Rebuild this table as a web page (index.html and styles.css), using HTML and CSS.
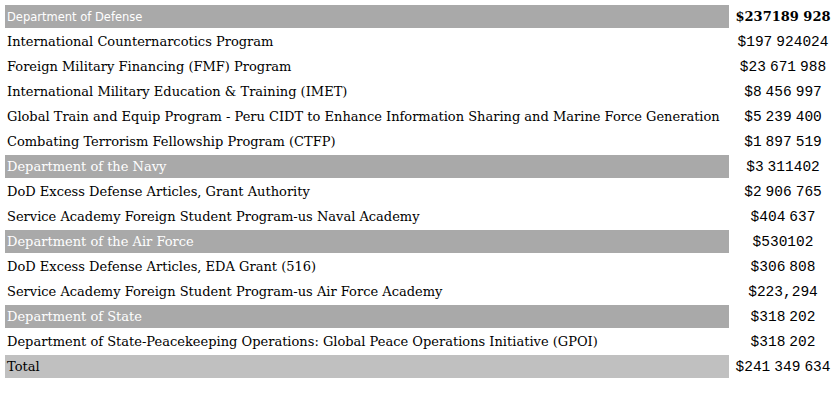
FILE: index.html
```html
<!DOCTYPE html>
<html>
<head>
<meta charset="utf-8">
<link rel="stylesheet" href="styles.css">
</head>
<body>
<table class="budget">
  <colgroup><col class="c-name"><col class="c-amt"></colgroup>
  <tr class="dept first"><td class="name">Department of Defense</td><td class="amt strong">$237189 928</td></tr>
  <tr><td class="name">International Counternarcotics Program</td><td class="amt">$197 924024</td></tr>
  <tr><td class="name">Foreign Military Financing (FMF) Program</td><td class="amt">$23 671 988</td></tr>
  <tr><td class="name">International Military Education &amp; Training (IMET)</td><td class="amt">$8 456 997</td></tr>
  <tr><td class="name">Global Train and Equip Program - Peru CIDT to Enhance Information Sharing and Marine Force Generation</td><td class="amt">$5 239 400</td></tr>
  <tr><td class="name">Combating Terrorism Fellowship Program (CTFP)</td><td class="amt">$1 897 519</td></tr>
  <tr class="dept"><td class="name">Department of the Navy</td><td class="amt">$3 311402</td></tr>
  <tr><td class="name">DoD Excess Defense Articles, Grant Authority</td><td class="amt">$2 906 765</td></tr>
  <tr><td class="name">Service Academy Foreign Student Program-us Naval Academy</td><td class="amt">$404 637</td></tr>
  <tr class="dept"><td class="name">Department of the Air Force</td><td class="amt">$530102</td></tr>
  <tr><td class="name">DoD Excess Defense Articles, EDA Grant (516)</td><td class="amt">$306 808</td></tr>
  <tr><td class="name">Service Academy Foreign Student Program-us Air Force Academy</td><td class="amt">$223,294</td></tr>
  <tr class="dept"><td class="name">Department of State</td><td class="amt">$318 202</td></tr>
  <tr><td class="name">Department of State-Peacekeeping Operations: Global Peace Operations Initiative (GPOI)</td><td class="amt">$318 202</td></tr>
  <tr class="total"><td class="name">Total</td><td class="amt">$241 349 634</td></tr>
</table>
</body>
</html>
```

FILE: styles.css
```css
html, body {
  margin: 0;
  padding: 0;
  background: #ffffff;
}

body {
  padding: 3px;
}

.budget {
  border-collapse: separate;
  border-spacing: 2px;
  table-layout: fixed;
  width: 834px;
  font-family: "DejaVu Serif", serif;
  font-size: 13px;
  color: #000000;
}

.c-name { width: 724px; }
.c-amt { width: 104px; }

.budget td {
  height: 23px;
  padding: 0 2px;
  white-space: nowrap;
  vertical-align: middle;
  box-sizing: border-box;
  overflow: hidden;
}

.amt {
  text-align: center;
  font-family: "Liberation Mono", monospace;
  font-size: 14.5px;
  word-spacing: -4.7px;
}

.amt.strong {
  font-family: "DejaVu Serif", serif;
  font-weight: bold;
  font-size: 13px;
  word-spacing: 0;
}

.dept .name {
  background: #a9a9a9;
  color: #ffffff;
}

.dept.first .name {
  font-family: "DejaVu Sans", sans-serif;
  font-size: 11.5px;
}

.total .name {
  background: #c0c0c0;
}
```
